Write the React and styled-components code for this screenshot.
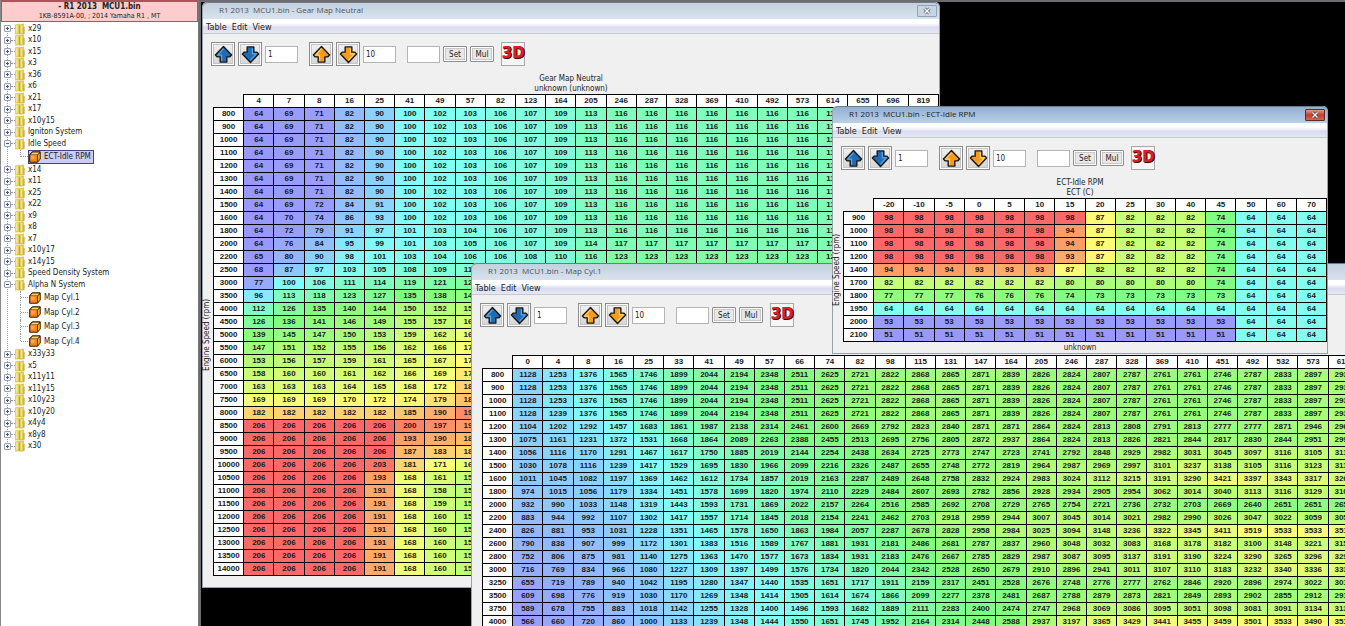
import { styled, createGlobalStyle } from "styled-components";

const GlobalStyle = createGlobalStyle`
  * {
    box-sizing: border-box;
  }

  body {
    margin: 0;
    background: #000;
    font-family: Tahoma, "DejaVu Sans Condensed", "DejaVu Sans", sans-serif;
    font-size: 8px;
    color: #222;
  }

  button, input {
    font: inherit;
    color: inherit;
    padding: 0;
    margin: 0;
  }
`;

const Container = styled.div`
  display: flex;
  height: 100vh;
  overflow: hidden;
`;

/* ---------- sidebar ---------- */

const Sidebar = styled.aside`
  flex: 0 0 199px;
  background: #fff;
  border-left: 1px solid #888;
  border-right: 1px solid #777;
`;

const RomHeader = styled.header`
  height: 22px;
  background: #fdcccc;
  border: 1px solid #b0525a;
  border-top-width: 2px;
  text-align: center;
  white-space: pre;
  line-height: 10px;
  font-size: 7px;
  color: #222;
`;

const RomName = styled.h1`
  margin: 0;
  font-size: 8px;
  line-height: 9px;
`;

const Tree = styled.ul`
  position: relative;
  display: flex;
  flex-direction: column;
  height: 430px;
  margin: 0;
  padding: 1px 0 0;
  list-style: none;

  &::before {
    content: "";
    position: absolute;
    left: 6px;
    top: 6px;
    bottom: 6px;
    border-left: 1px dotted #999;
  }
`;

const Folder = styled.li`
  flex: 4 1 0;
  min-height: 0;
  display: flex;
  align-items: center;
  padding-left: 3px;
`;

const Expander = styled.button`
  position: relative;
  width: 7px;
  height: 7px;
  border: 1px solid #9aa0b4;
  border-radius: 1px;
  background: #f4f5fa;

  &::before {
    content: "";
    position: absolute;
    left: 1px;
    top: 2px;
    width: 3px;
    height: 1px;
    background: #557;
  }

  &::after {
    content: "";
    position: absolute;
    left: 2px;
    top: 1px;
    width: 1px;
    height: ${(p) => (p.$open ? 0 : 3)}px;
    background: #557;
  }
`;

const Dash = styled.span`
  width: ${(p) => p.$width}px;
  border-top: 1px dotted #999;
`;

const FolderLabel = styled.span`
  margin-left: 3px;
  line-height: 10px;
`;

const Leaf = styled.li`
  position: relative;
  flex: 5 1 0;
  min-height: 0;
  display: flex;
  align-items: center;
  padding-left: 20px;

  &::before {
    content: "";
    position: absolute;
    left: 19px;
    top: 0;
    bottom: ${(p) => (p.$last ? "50%" : 0)};
    border-left: 1px dotted #999;
  }
`;

const LeafLink = styled.a`
  display: flex;
  align-items: center;
  gap: 3px;
  height: 14px;
  padding-right: 2px;
  color: inherit;
  text-decoration: none;
  border: 1px solid ${(p) => (p.$selected ? "#44447c" : "transparent")};
  background: ${(p) => (p.$selected ? "#ccccf6" : "transparent")};
`;

/* ---------- desktop and windows ---------- */

const Desktop = styled.main`
  position: relative;
  flex: 1;
  overflow: hidden;
  background: #000;
  box-shadow: inset 2px 2px 0 #6c6c70;
`;

const Frame = styled.section`
  position: absolute;
  left: ${(p) => p.$left}px;
  top: ${(p) => p.$top}px;
  right: ${(p) => (p.$bleed ? "-60px" : "auto")};
  background: #f0f0f0;
  border: 1px solid #9aa0a8;
  border-top: 0;
  border-radius: 5px 5px 0 0;
`;

const TitleBar = styled.div`
  display: flex;
  align-items: center;
  justify-content: space-between;
  height: 17px;
  padding: 0 2px 1px 16px;
  border-top: 1px solid #6d7a88;
  border-radius: 5px 5px 0 0;
  background: ${(p) =>
    p.$active
      ? "linear-gradient(#93aed0, #b9d0ea)"
      : "linear-gradient(#c3d0dd, #d8e3ee)"};
`;

const WindowTitle = styled.h2`
  margin: 0;
  font-family: "Open Sans", "Noto Sans", sans-serif;
  font-size: 8px;
  font-weight: 400;
  line-height: 14px;
  padding-bottom: 2px;
  white-space: pre;
  color: ${(p) => (p.$active ? "#222" : "#4c5560")};
`;

const Close = styled.button`
  display: flex;
  align-items: center;
  justify-content: center;
  width: 20px;
  height: 12px;
  border: 1px solid ${(p) => (p.$active ? "#5e2a28" : "#8fa3b8")};
  border-radius: 1px;
  background: ${(p) =>
    p.$active ? "linear-gradient(#dc9a8e, #c0402c 50%, #cf6a50)" : "#c6d4e3"};
`;

const MenuBar = styled.nav`
  display: flex;
  gap: 5px;
  height: 15px;
  padding: 0 3px;
  border-bottom: 1px solid #c6c8d0;
  background: linear-gradient(#fff 30%, #dadcee 60%, #e6e8f6);
`;

const MenuItem = styled.button`
  border: 0;
  background: none;
  font-size: 9px;
  line-height: 14px;
  padding-top: 1px;
`;

const Toolbar = styled.div`
  display: flex;
  gap: 11px;
  padding: 8px 8px 0;
`;

const Group = styled.div`
  display: flex;
  align-items: center;
  gap: 3px;
`;

const IconButton = styled.button`
  display: flex;
  align-items: center;
  justify-content: center;
  width: 24px;
  height: 24px;
  border: 1px solid #8c8c8c;
  box-shadow: inset 0 0 0 1px #fff, inset 0 0 0 2px #c4c4c4;
  background: linear-gradient(#f2f2f2, #d4d4d4);
`;

const Field = styled.input`
  width: 33px;
  height: 17px;
  padding: 0 2px;
  border: 1px solid #b4b4b4;
  background: #fff;
`;

const TextButton = styled.button`
  width: 24px;
  height: 16px;
  border: 1px solid #8e8e8e;
  border-radius: 1px;
  box-shadow: inset 0 0 0 1px #fff, inset 0 0 0 2px #c8c8c8;
  background: #e8e8e8;
`;

const View3D = styled.button`
  width: 24px;
  height: 24px;
  margin-left: 4px;
  border: 1px solid #a8a8a8;
  background: #f6f6f6;
  font-family: "DejaVu Sans", sans-serif;
  font-size: 15px;
  font-weight: 700;
  line-height: 20px;
  color: #d8202a;
  text-shadow: 1px 0 0 #400, 1px 1px 0 #300;
  display: flex;
  justify-content: center;
`;

const Caption = styled.div`
  height: 28px;
  padding-top: 8px;
  text-align: center;
  line-height: 10px;
`;

const Sheet = styled.div`
  display: flex;
`;

const AxisLabel = styled.div`
  width: 10px;
  writing-mode: vertical-rl;
  transform: rotate(180deg);
  text-align: center;
  line-height: 8px;
  white-space: nowrap;
`;

const Footer = styled.div`
  height: 11px;
  line-height: 11px;
  text-align: center;
`;

const Grid = styled.table`
  table-layout: fixed;
  width: ${(p) => p.$width}px;
  border-collapse: collapse;
  font-family: "Liberation Sans", Arial, sans-serif;
  font-size: 8px;
  font-weight: 700;
  line-height: 12px;
  color: #1a1a1a;

  th, td {
    height: 13px;
    padding: 0;
    text-align: center;
    border: 1px solid #000;
    overflow: hidden;
  }

  th {
    background: #fff;
  }

  thead td {
    border: 0;
  }
`;

/* ---------- icons ---------- */

const FolderIcon = () => (
  <svg width="10" height="12" viewBox="0 0 10 12">
    <path d="M0 1.5 4.6 0.5V11.2L0 11.6Z" fill="#e2d05c" />
    <path d="M1 2.4 2.6 2V9.5L1 10Z" fill="#f4e99a" />
    <path d="M3.9 3 4.9 1V10.8L3.9 11.4Z" fill="#b49c38" />
    <path d="M4.8 1.2 9 0.5V11.2L4.8 11.8Z" fill="#dcc954" />
    <path d="M5.8 2.2 7.2 1.9V9.8L5.8 10.2Z" fill="#f2e690" />
    <path d="M8.4 4.5 9.6 3.8V10.6L8.4 11.2Z" fill="#bca642" />
  </svg>
);

const CubeIcon = () => (
  <svg width="12" height="12" viewBox="0 0 12 12">
    <path d="M0.7 3.6 3.3 0.8H11.2V8L8.5 11.2H0.7Z" fill="#4a2400" stroke="#3a1c00" />
    <path d="M1.4 3.4 3.6 1.4H10.4L8.4 3.4Z" fill="#ffd65c" />
    <path d="M9 4 10.8 2.2V7.8L9 10Z" fill="#e8b030" />
    <rect x="1.2" y="4" width="7" height="6.7" fill="#f58220" />
    <rect x="2" y="4.8" width="3.6" height="3.4" fill="#ffa74e" />
  </svg>
);

const ArrowIcon = ({ color, light, down }) => (
  <svg width="19" height="19" viewBox="0 0 20 20">
    <g transform={down ? "rotate(180 10 10)" : undefined}>
      <path
        d="M10 1.5 18.5 10.5 16.5 12.5H13.5V18H6.5V12.5H3.5L1.5 10.5Z"
        fill={color}
        stroke="#1a1a1a"
        strokeWidth="1.5"
        strokeLinejoin="round"
      />
      <path d="M10 3.8 4 10.6H8V16.5" fill="none" stroke={light} strokeWidth="1.3" />
    </g>
  </svg>
);

const CrossIcon = ({ active }) => (
  <svg width="8" height="8" viewBox="0 0 8 8">
    <path d="M1.5 1.5 6.5 6.5M6.5 1.5 1.5 6.5" stroke={active ? "#5b3030" : "#5d6873"} strokeWidth="3" />
    <path d="M1.5 1.5 6.5 6.5M6.5 1.5 1.5 6.5" stroke="#fff" strokeWidth="1.4" />
  </svg>
);

/* ---------- data ---------- */

const tree = [
  "x29", "x10", "x15", "x3", "x36", "x6", "x21", "x17", "x10y15", "Igniton System",
  { name: "Idle Speed", maps: ["ECT-Idle RPM"] },
  "x14", "x11", "x25", "x22", "x9", "x8", "x7", "x10y17", "x14y15", "Speed Density System",
  { name: "Alpha N System", maps: ["Map Cyl.1", "Map Cyl.2", "Map Cyl.3", "Map Cyl.4"] },
  "x33y33", "x5", "x11y11", "x11y15", "x10y23", "x10y20", "x4y4", "x8y8", "x30",
];

// first number of each line is the row's rpm; a short line holds its last value
const parse = (text) =>
  text.trim().split("\n").map((line) => line.trim().split(/\s+/).map(Number));

const gearMap = {
  title: "Gear Map Neutral",
  unit: "unknown (unknown)",
  axis: "Engine Speed (rpm)",
  min: 64,
  max: 206,
  columns: [4, 7, 8, 16, 25, 41, 49, 57, 82, 123, 164, 205, 246, 287, 328, 369, 410, 492, 573, 614, 655, 696, 819],
  rows: parse(`
    800 64 69 71 82 90 100 102 103 106 107 109 113 116
    900 64 69 71 82 90 100 102 103 106 107 109 113 116
    1000 64 69 71 82 90 100 102 103 106 107 109 113 116
    1100 64 69 71 82 90 100 102 103 106 107 109 113 116
    1200 64 69 71 82 90 100 102 103 106 107 109 113 116
    1300 64 69 71 82 90 100 102 103 106 107 109 113 116
    1400 64 69 71 82 90 100 102 103 106 107 109 113 116
    1500 64 69 72 84 91 100 102 103 106 107 109 113 116
    1600 64 70 74 86 93 100 102 103 106 107 109 113 116
    1800 64 72 79 91 97 101 103 104 106 107 109 113 116
    2000 64 76 84 95 99 101 103 105 106 107 109 114 117
    2200 65 80 90 98 101 103 104 106 106 108 110 116 123
    2500 68 87 97 103 105 108 109 110
    3000 77 100 106 111 114 119 121 123
    3500 96 113 118 123 127 135 138 141
    4000 112 126 135 140 144 150 152 155
    4500 126 136 141 146 149 155 157 161
    5000 139 145 147 150 153 159 162 167
    5500 147 151 152 155 156 162 166 171
    6000 153 156 157 159 161 165 167 173
    6500 158 160 160 161 162 166 169 177
    7000 163 163 163 164 165 168 172 182
    7500 169 169 169 170 172 174 179 186
    8000 182 182 182 182 182 185 190 198
    8500 206 206 206 206 206 200 197 195
    9000 206 206 206 206 206 193 190 188
    9500 206 206 206 206 206 187 183 181
    10000 206 206 206 206 203 181 171 166
    10500 206 206 206 206 193 168 161 157
    11000 206 206 206 206 191 168 158 155
    11500 206 206 206 206 191 168 159 155
    12000 206 206 206 206 191 168 160 155
    12500 206 206 206 206 191 168 160 155
    13000 206 206 206 206 191 168 160 155
    13500 206 206 206 206 191 168 160 155
    14000 206 206 206 206 191 168 160 155
  `),
};

const cylMap = {
  title: "Map Cyl.1",
  min: 312,
  max: 4607,
  columns: [0, 4, 8, 16, 25, 33, 41, 49, 57, 66, 74, 82, 98, 115, 131, 147, 164, 205, 246, 287, 328, 369, 410, 451, 492, 532, 573, 614],
  rows: parse(`
    800 1128 1253 1376 1565 1746 1899 2044 2194 2348 2511 2625 2721 2822 2868 2865 2871 2839 2826 2824 2807 2787 2761 2761 2746 2787 2833 2897 2937
    900 1128 1253 1376 1565 1746 1899 2044 2194 2348 2511 2625 2721 2822 2868 2865 2871 2839 2826 2824 2807 2787 2761 2761 2746 2787 2833 2897 2937
    1000 1128 1253 1376 1565 1746 1899 2044 2194 2348 2511 2625 2721 2822 2868 2865 2871 2839 2826 2824 2807 2787 2761 2761 2746 2787 2833 2897 2937
    1100 1128 1239 1376 1565 1746 1899 2044 2194 2348 2511 2625 2721 2822 2868 2865 2871 2839 2826 2824 2807 2787 2761 2761 2746 2787 2833 2897 2937
    1200 1104 1202 1292 1457 1683 1861 1987 2138 2314 2461 2600 2669 2792 2823 2840 2871 2871 2864 2824 2813 2808 2791 2813 2777 2777 2871 2946 2962
    1300 1075 1161 1231 1372 1531 1668 1864 2089 2263 2388 2455 2513 2695 2756 2805 2872 2937 2864 2824 2813 2826 2821 2844 2817 2830 2844 2951 2991
    1400 1056 1116 1170 1291 1467 1617 1750 1885 2019 2144 2254 2438 2634 2725 2773 2747 2723 2741 2792 2848 2929 2982 3031 3045 3097 3116 3105 3112
    1500 1030 1078 1116 1239 1417 1529 1695 1830 1966 2099 2216 2326 2487 2655 2748 2772 2819 2964 2987 2969 2997 3101 3237 3138 3105 3116 3123 3112
    1600 1011 1045 1082 1197 1369 1462 1612 1734 1857 2019 2163 2287 2489 2648 2758 2832 2924 2983 3024 3112 3215 3191 3290 3421 3397 3343 3317 3264
    1800 974 1015 1056 1179 1334 1451 1578 1699 1820 1974 2110 2229 2484 2607 2693 2782 2856 2928 2934 2905 2954 3062 3014 3040 3113 3116 3129 3106
    2000 932 990 1033 1148 1319 1443 1593 1731 1869 2022 2157 2264 2516 2585 2692 2708 2729 2765 2754 2721 2736 2732 2703 2669 2640 2651 2651 2652
    2200 883 944 992 1107 1302 1417 1557 1714 1845 2018 2154 2241 2462 2703 2918 2959 2944 3007 3045 3014 3021 2982 2990 3026 3047 3022 3059 3052
    2400 826 881 953 1031 1228 1351 1465 1578 1650 1863 1984 2057 2287 2678 2828 2958 2984 3025 3094 3148 3236 3322 3345 3411 3519 3533 3533 3512
    2600 790 838 907 999 1172 1301 1383 1516 1589 1767 1881 1931 2181 2486 2681 2787 2837 2960 3048 3032 3083 3168 3178 3182 3100 3148 3221 3152
    2800 752 806 875 981 1140 1275 1363 1470 1577 1673 1834 1931 2183 2476 2667 2785 2829 2987 3087 3095 3137 3191 3190 3224 3290 3265 3296 3292
    3000 716 769 834 966 1080 1227 1309 1397 1499 1576 1734 1820 2044 2342 2528 2650 2679 2910 2896 2941 3011 3107 3110 3183 3232 3340 3336 3332
    3250 655 719 789 940 1042 1195 1280 1347 1440 1535 1651 1717 1911 2159 2317 2451 2528 2676 2748 2776 2777 2762 2846 2920 2896 2974 3022 3012
    3500 609 698 776 919 1030 1170 1269 1348 1414 1505 1614 1674 1866 2099 2277 2378 2481 2687 2788 2879 2873 2821 2849 2893 2902 2855 2912 2912
    3750 589 678 755 883 1018 1142 1255 1328 1400 1496 1593 1682 1889 2111 2283 2400 2474 2747 2968 3069 3086 3095 3051 3098 3081 3091 3134 3132
    4000 566 660 720 860 1000 1133 1239 1348 1444 1550 1651 1745 1952 2164 2314 2448 2588 2937 3197 3365 3429 3441 3455 3459 3501 3533 3490 3512
  `),
};

const idleMap = {
  title: "ECT-Idle RPM",
  unit: "ECT (C)",
  axis: "Engine Speed (rpm)",
  footer: "unknown",
  min: 51,
  max: 98,
  columns: [-20, -10, -5, 0, 5, 10, 15, 20, 25, 30, 40, 45, 50, 60, 70],
  rows: parse(`
    900 98 98 98 98 98 98 98 87 82 82 82 74 64
    1000 98 98 98 98 98 98 94 87 82 82 82 74 64
    1100 98 98 98 98 98 98 94 87 82 82 82 74 64
    1200 98 98 98 98 98 98 93 87 82 82 82 74 64
    1400 94 94 94 93 93 93 87 82 82 82 82 74 64
    1700 82 82 82 82 82 82 80 80 80 80 80 74 64
    1800 77 77 77 76 76 76 74 73 73 73 73 73 64
    1950 64
    2000 53 53 53 53 53 53 53 53 53 53 53 53 64
    2100 51 51 51 51 51 51 51 51 51 51 51 51 64
  `),
};

const stops = [
  [0, 152, 152, 255],
  [0.06, 152, 158, 255],
  [0.13, 148, 187, 255],
  [0.19, 138, 212, 255],
  [0.26, 130, 255, 248],
  [0.34, 128, 255, 200],
  [0.41, 128, 255, 165],
  [0.5, 128, 255, 128],
  [0.58, 155, 255, 124],
  [0.66, 200, 255, 120],
  [0.76, 255, 255, 120],
  [0.84, 255, 205, 112],
  [0.91, 255, 160, 104],
  [1, 255, 104, 104],
];

const heat = (value, min, max) => {
  const t = Math.min(1, Math.max(0, (value - min) / (max - min)));
  const i = Math.max(1, stops.findIndex((s) => s[0] >= t));
  const a = stops[i - 1];
  const b = stops[i];
  const k = (t - a[0]) / (b[0] - a[0]);
  const mix = [1, 2, 3].map((c) => Math.round(a[c] + (b[c] - a[c]) * k));
  return `rgb(${mix.join(",")})`;
};

/* ---------- components ---------- */

const DataGrid = ({ map }) => (
  <Grid $width={Math.round(((map.columns.length + 1) * 121) / 4)}>
    <thead>
      <tr>
        <td />
        {map.columns.map((c) => (
          <th key={c} scope="col">{c}</th>
        ))}
      </tr>
    </thead>
    <tbody>
      {map.rows.map(([rpm, ...values]) => (
        <tr key={rpm}>
          <th scope="row">{rpm}</th>
          {map.columns.map((c, i) => {
            const value = values[Math.min(i, values.length - 1)];
            return (
              <td key={c} style={{ background: heat(value, map.min, map.max) }}>
                {value}
              </td>
            );
          })}
        </tr>
      ))}
    </tbody>
  </Grid>
);

const blue = { color: "#1f6cb4", light: "#5fa4dc" };
const orange = { color: "#f59a1a", light: "#ffd070" };

const MapWindow = ({ map, left, top, active, bleed }) => (
  <Frame $left={left} $top={top} $bleed={bleed}>
    <TitleBar $active={active}>
      <WindowTitle $active={active}>{`R1 2013  MCU1.bin - ${map.title}`}</WindowTitle>
      <Close $active={active} aria-label="Close">
        <CrossIcon active={active} />
      </Close>
    </TitleBar>
    <MenuBar>
      <MenuItem>Table</MenuItem>
      <MenuItem>Edit</MenuItem>
      <MenuItem>View</MenuItem>
    </MenuBar>
    <Toolbar>
      <Group>
        <IconButton aria-label="Increase fine"><ArrowIcon {...blue} /></IconButton>
        <IconButton aria-label="Decrease fine"><ArrowIcon {...blue} down /></IconButton>
        <Field aria-label="Fine step" defaultValue="1" />
      </Group>
      <Group>
        <IconButton aria-label="Increase coarse"><ArrowIcon {...orange} /></IconButton>
        <IconButton aria-label="Decrease coarse"><ArrowIcon {...orange} down /></IconButton>
        <Field aria-label="Coarse step" defaultValue="10" />
      </Group>
      <Group>
        <Field aria-label="Value" />
        <TextButton>Set</TextButton>
        <TextButton>Mul</TextButton>
        <View3D>3D</View3D>
      </Group>
    </Toolbar>
    <Caption>
      <div>{map.title}</div>
      <div>{map.unit}</div>
    </Caption>
    <Sheet>
      <AxisLabel>{map.axis}</AxisLabel>
      <DataGrid map={map} />
    </Sheet>
    <Footer>{map.footer}</Footer>
  </Frame>
);

const TreeNode = ({ node }) => {
  const { name, maps = [] } = typeof node === "string" ? { name: node } : node;
  return (
    <>
      <Folder>
        <Expander $open={maps.length > 0} aria-label={`Toggle ${name}`} />
        <Dash $width={4} />
        <FolderIcon />
        <FolderLabel>{name}</FolderLabel>
      </Folder>
      {maps.map((m, i) => (
        <Leaf key={m} $last={i === maps.length - 1}>
          <Dash $width={7} />
          <LeafLink href="#" $selected={m === "ECT-Idle RPM"}>
            <CubeIcon />
            {m}
          </LeafLink>
        </Leaf>
      ))}
    </>
  );
};

const App = () => {
  return (
    <Container>
      <GlobalStyle />
      <Sidebar>
        <RomHeader>
          <RomName>{"- R1 2013  MCU1.bin"}</RomName>
          {"1KB-8591A-00, ; 2014 Yamaha R1 , MT"}
        </RomHeader>
        <Tree>
          {tree.map((node) => (
            <TreeNode key={node.name || node} node={node} />
          ))}
        </Tree>
      </Sidebar>
      <Desktop>
        <MapWindow map={gearMap} left={3} top={2} />
        <MapWindow map={cylMap} left={272} top={263} bleed />
        <MapWindow map={idleMap} left={633} top={106} active />
      </Desktop>
    </Container>
  );
};

export default App;
